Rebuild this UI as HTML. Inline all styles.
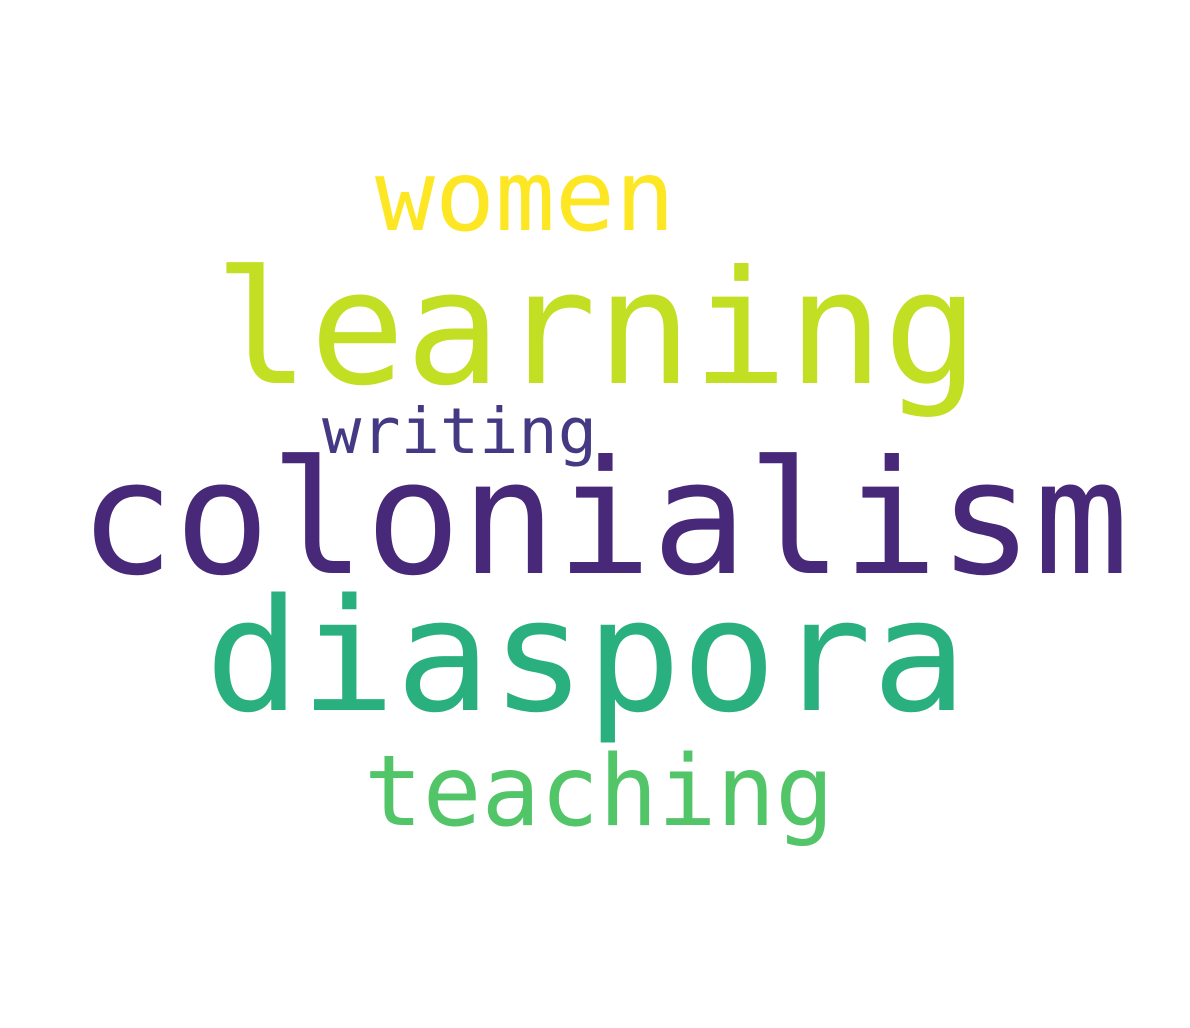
<!DOCTYPE html>
<html><head><meta charset="utf-8"><style>
html,body{margin:0;padding:0;background:#fff;}
svg{display:block;}
text{font-family:"DejaVu Sans Mono","Liberation Mono",monospace;}
</style></head><body>
<svg width="1190" height="1028" viewBox="0 0 1190 1028" xmlns="http://www.w3.org/2000/svg">
<rect width="1190" height="1028" fill="#fff"/>
<text x="375" y="230" font-size="98" fill="#fde725" textLength="300" lengthAdjust="spacingAndGlyphs">women</text>
<text x="214" y="383" font-size="158" fill="#c2df23" textLength="765" lengthAdjust="spacingAndGlyphs">learning</text>
<text x="322" y="453" font-size="63" fill="#443983" textLength="275" lengthAdjust="spacingAndGlyphs">writing</text>
<text x="79" y="573" font-size="158" fill="#482878" textLength="1050" lengthAdjust="spacingAndGlyphs">colonialism</text>
<text x="205" y="710" font-size="156" fill="#2ab07f" textLength="762" lengthAdjust="spacingAndGlyphs">diaspora</text>
<text x="364" y="825" font-size="98" fill="#52c569" textLength="470" lengthAdjust="spacingAndGlyphs">teaching</text>
</svg>
</body></html>
